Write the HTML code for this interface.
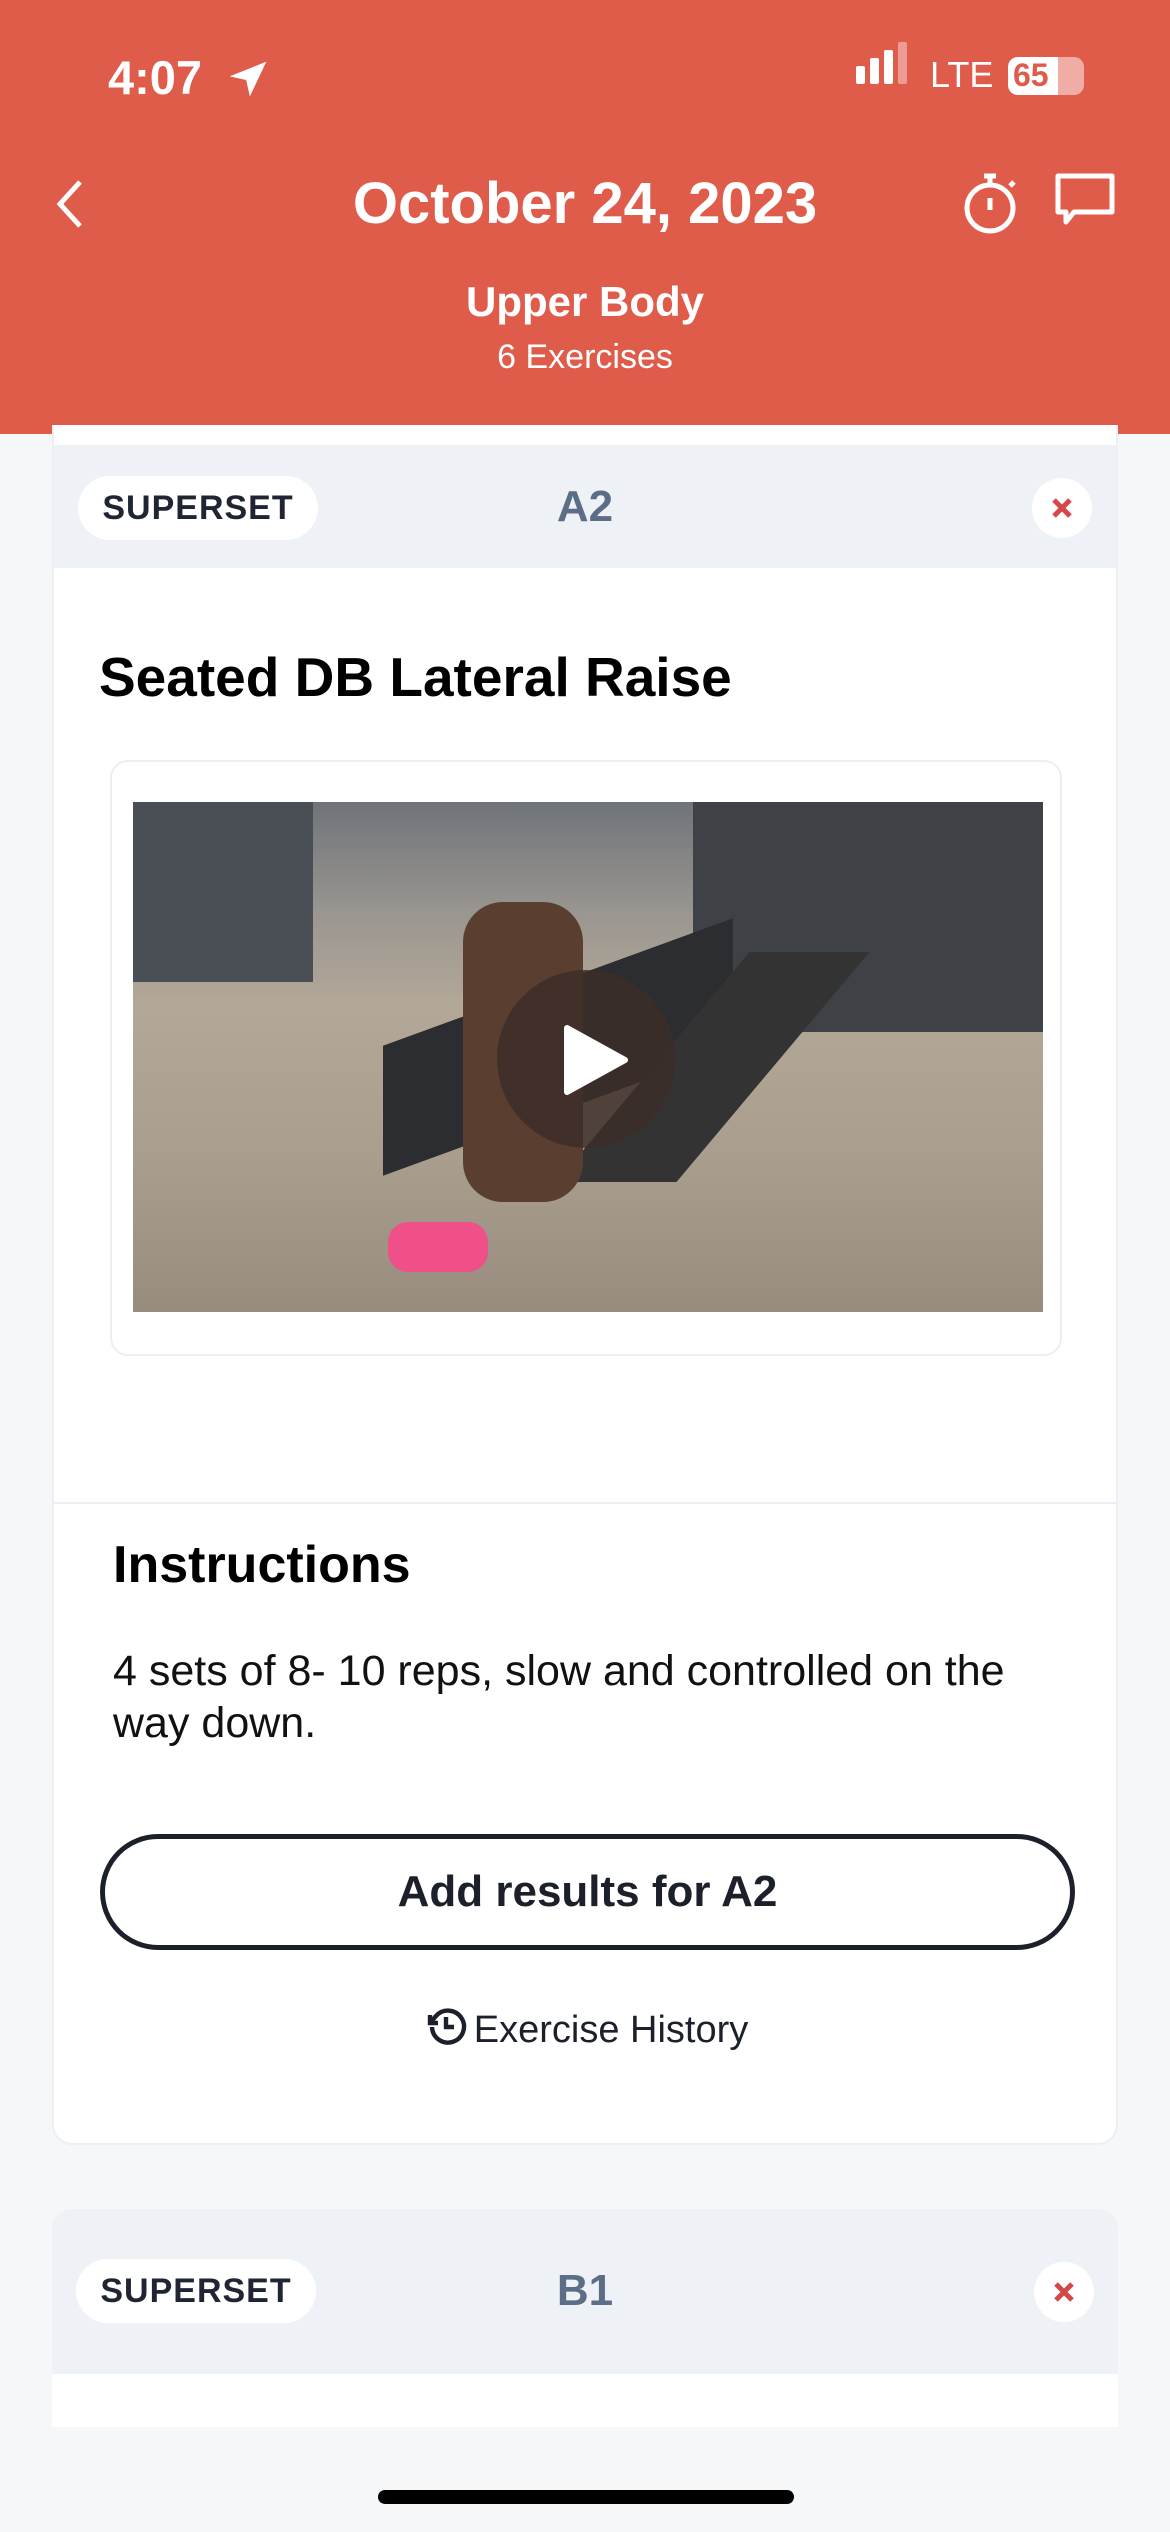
<!DOCTYPE html>
<html><head><meta charset="utf-8"><style>
*{margin:0;padding:0;box-sizing:border-box}
body{width:1170px;height:2532px;background:#f6f7f9;font-family:"Liberation Sans",sans-serif;position:relative;overflow:hidden}
.abs{position:absolute}
.hdr{left:0;top:0;width:1170px;height:434px;background:#df5b4a;color:#fff}
.c{text-align:center;width:100%;left:0}
.card{left:52px;width:1066px;background:#fff;border:2px solid #eceff3;border-radius:20px}
.band{left:0;width:100%;background:#eef1f5}
.pill{left:24px;width:240px;height:64px;background:#fff;border-radius:32px;font-size:34px;font-weight:bold;color:#1f2533;text-align:center;line-height:64px;letter-spacing:1px}
.lbl{left:0;width:100%;text-align:center;font-size:44px;font-weight:bold;color:#5c6e85}
.x{width:60px;height:60px;border-radius:30px;background:#fff;right:24px}
</style></head><body>
<div class="abs hdr">
  <div class="abs" style="left:108px;top:50px;font-size:47px;font-weight:bold">4:07</div>
  <svg class="abs" style="left:226px;top:58px" width="44" height="44" viewBox="0 0 24 24"><path d="M22 2 2 10l9 2 2 9z" fill="#fff"/></svg>
  <div class="abs" style="left:856px;top:66px;width:9px;height:18px;background:#fff;border-radius:2px"></div>
  <div class="abs" style="left:870px;top:58px;width:9px;height:26px;background:#fff;border-radius:2px"></div>
  <div class="abs" style="left:884px;top:50px;width:9px;height:34px;background:#fff;border-radius:2px"></div>
  <div class="abs" style="left:898px;top:42px;width:9px;height:42px;background:rgba(255,255,255,.4);border-radius:2px"></div>
  <div class="abs" style="left:930px;top:54px;font-size:36px">LTE</div>
  <div class="abs" style="left:1008px;top:57px;width:76px;height:38px;border-radius:10px;background:rgba(255,255,255,.5)"></div>
  <div class="abs" style="left:1008px;top:57px;width:50px;height:38px;border-radius:10px 0 0 10px;background:#fff"></div>
  <div class="abs" style="left:1013px;top:57px;font-size:32px;font-weight:bold;color:#df5b4a">65</div>
  <svg class="abs" style="left:52px;top:178px" width="36" height="52" viewBox="0 0 36 52"><path d="M28 4 8 26l20 22" stroke="#fff" stroke-width="5" fill="none"/></svg>
  <div class="abs c" style="top:170px;font-size:58px;font-weight:bold">October 24, 2023</div>
  <svg class="abs" style="left:960px;top:170px" width="62" height="66" viewBox="0 0 62 66"><circle cx="30" cy="38" r="23" stroke="#fff" stroke-width="5" fill="none"/><path d="M30 6v10M24 6h12M30 28v12M50 16l4-4" stroke="#fff" stroke-width="5"/></svg>
  <svg class="abs" style="left:1054px;top:172px" width="62" height="62" viewBox="0 0 62 62"><path d="M4 4h54v36H20l-8 10V40H4z" stroke="#fff" stroke-width="5" fill="none" stroke-linejoin="round"/></svg>
  <div class="abs c" style="top:278px;font-size:42px;font-weight:bold">Upper Body</div>
  <div class="abs c" style="top:338px;font-size:34px">6 Exercises</div>
</div>

<div class="abs card" style="top:425px;height:1720px;border-top:none;border-radius:0 0 20px 20px">
  <div class="abs band" style="top:20px;height:123px">
    <div class="abs pill" style="top:31px">SUPERSET</div>
    <div class="abs lbl" style="top:37px">A2</div>
    <div class="abs x" style="top:33px"><svg width="60" height="60"><path d="M22 22l16 16M38 22 22 38" stroke="#d5484a" stroke-width="5"/></svg></div>
  </div>
  <div class="abs" style="left:45px;top:220px;font-size:55px;font-weight:bold;color:#000">Seated DB Lateral Raise</div>
  <div class="abs" style="left:56px;top:335px;width:952px;height:596px;border:2px solid #eceef1;border-radius:18px">
    <div class="abs" style="left:21px;top:40px;width:910px;height:510px;overflow:hidden;background:linear-gradient(180deg,#6f7479 0%,#9a9690 22%,#b3a898 40%,#a99e8e 70%,#978c7d 100%)">
      <div class="abs" style="left:0;top:0;width:180px;height:180px;background:#4a4f55"></div>
      <div class="abs" style="left:560px;top:0;width:350px;height:230px;background:#3e4146"></div>
      <div class="abs" style="left:250px;top:180px;width:350px;height:130px;background:#2c2d30;transform:skewY(-20deg)"></div>
      <div class="abs" style="left:520px;top:150px;width:120px;height:230px;background:#333;transform:skewX(-40deg)"></div>
      <div class="abs" style="left:330px;top:100px;width:120px;height:300px;background:#5a3f30;border-radius:40px"></div>
      <div class="abs" style="left:255px;top:420px;width:100px;height:50px;background:#f0508a;border-radius:20px"></div>
      <div class="abs" style="left:364px;top:168px;width:178px;height:178px;border-radius:50%;background:rgba(60,45,40,.82)"></div>
      <svg class="abs" style="left:430px;top:222px" width="66" height="72"><path d="M4 4l58 32L4 68z" fill="#fff" stroke="#fff" stroke-width="6" stroke-linejoin="round"/></svg>
    </div>
  </div>
  <div class="abs" style="left:0;top:1077px;width:100%;height:2px;background:#eceef1"></div>
  <div class="abs" style="left:59px;top:1110px;font-size:52px;font-weight:bold;color:#000">Instructions</div>
  <div class="abs" style="left:59px;top:1220px;width:960px;font-size:43px;line-height:52px;color:#111">4 sets of 8- 10 reps, slow and controlled on the way down.</div>
  <div class="abs" style="left:46px;top:1409px;width:975px;height:116px;border:5px solid #1c202a;border-radius:58px;text-align:center;line-height:106px;font-size:44px;font-weight:bold;color:#1c202a">Add results for A2</div>
  <div class="abs" style="left:0;top:1578px;width:100%;text-align:center;font-size:38px;color:#1c202a"><svg width="48" height="48" viewBox="0 0 24 24" style="vertical-align:-9px;margin-right:4px"><path d="M4 6v4h4M5 12a8 8 0 1 0 2-5.5L4 10" stroke="#1c202a" stroke-width="2.2" fill="none"/><path d="M12 7v5h4" stroke="#1c202a" stroke-width="2.2" fill="none"/></svg>Exercise History</div>
</div>

<div class="abs card" style="top:2209px;height:300px;border:none;border-radius:20px 20px 0 0;background:#fff">
  <div class="abs band" style="top:0;height:165px;border-radius:20px 20px 0 0">
    <div class="abs pill" style="top:50px">SUPERSET</div>
    <div class="abs lbl" style="top:57px">B1</div>
    <div class="abs x" style="top:53px"><svg width="60" height="60"><path d="M22 22l16 16M38 22 22 38" stroke="#d5484a" stroke-width="5"/></svg></div>
  </div>
</div>
<div class="abs" style="left:0;top:2427px;width:1170px;height:105px;background:#f6f7f9"></div>
<div class="abs" style="left:378px;top:2490px;width:416px;height:14px;border-radius:7px;background:#000"></div>
</body></html>
